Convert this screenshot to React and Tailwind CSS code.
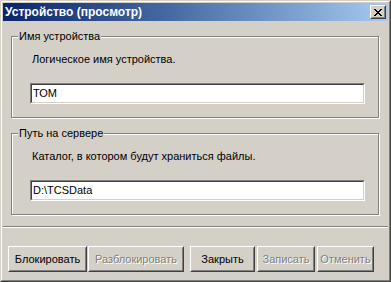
export default function App() {
  const btn =
    "h-[26px] flex items-center justify-center border border-t-white border-l-white border-r-[#404040] border-b-[#404040]";
  const btnInner =
    "w-full h-full flex items-center justify-center border border-t-[#d4d0c8] border-l-[#d4d0c8] border-r-[#808080] border-b-[#808080]";
  const disabled = "text-[#808080] [text-shadow:1px_1px_0_#fff]";

  return (
    <div className="w-[391px] h-[282px] bg-[#d4d0c8] border border-t-[#d4d0c8] border-l-[#d4d0c8] border-r-[#404040] border-b-[#404040] font-['Liberation_Sans',Arial,sans-serif] text-[11px] leading-[13px] text-black">
      <div className="h-full border border-t-white border-l-white border-r-[#808080] border-b-[#808080] p-px flex flex-col">
        {/* title bar */}
        <div className="h-[18px] flex items-center justify-between pl-[2px] pr-[2px] bg-gradient-to-r from-[#0a246a] to-[#a6caf0]">
          <span className="text-white font-bold text-[12px]">Устройство (просмотр)</span>
          <div className="w-[16px] h-[14px] border border-t-white border-l-white border-r-[#404040] border-b-[#404040] bg-[#d4d0c8]">
            <div className="w-full h-full border border-t-[#d4d0c8] border-l-[#d4d0c8] border-r-[#808080] border-b-[#808080] flex items-center justify-center">
              <svg width="8" height="7" viewBox="0 0 8 7" shapeRendering="crispEdges">
                <path d="M0 0h2v1h-2zM6 0h2v1h-2zM1 1h2v1h-2zM5 1h2v1h-2zM2 2h4v1h-4zM3 3h2v1h-2zM2 4h4v1h-4zM1 5h2v1h-2zM5 5h2v1h-2zM0 6h2v1h-2zM6 6h2v1h-2z" fill="#000" />
              </svg>
            </div>
          </div>
        </div>

        {/* body */}
        <div className="flex-1 flex flex-col pl-[8px] pr-[9px] pt-[15px]">
          <Group label="Имя устройства" hint="Логическое имя устройства." value="ТОМ" />
          <div className="h-[15px]" />
          <Group label="Путь на сервере" hint="Каталог, в котором будут храниться файлы." value="D:\TCSData" />

          <div className="mt-[11px] -mx-[8px] mr-[-9px] h-[2px] border-t border-t-[#808080] border-b border-b-white" />

          <div className="mt-[18px] flex items-center -ml-[3px]">
            <div className={`${btn} w-[79px]`}>
              <div className={btnInner}>Блокировать</div>
            </div>
            <div className={`${btn} w-[96px] ml-[1px]`}>
              <div className={`${btnInner} ${disabled}`}>Разблокировать</div>
            </div>
            <div className={`${btn} w-[65px] ml-[6px]`}>
              <div className={btnInner}>Закрыть</div>
            </div>
            <div className={`${btn} w-[58px] ml-[2px]`}>
              <div className={`${btnInner} ${disabled}`}>Записать</div>
            </div>
            <div className={`${btn} w-[57px] ml-[2px]`}>
              <div className={`${btnInner} ${disabled}`}>Отменить</div>
            </div>
          </div>
        </div>
      </div>
    </div>
  );
}

function Group({ label, hint, value }) {
  return (
    <div className="relative h-[82px] border border-[#808080] shadow-[inset_1px_1px_0_#fff,1px_1px_0_#fff] pt-[16px] pl-[20px] pr-[13px]">
      <span className="absolute top-[-7px] left-[6px] px-px bg-[#d4d0c8]">{label}</span>
      <div>{hint}</div>
      <div className="mt-[17px] h-[21px] border border-t-[#808080] border-l-[#808080] border-r-white border-b-white -ml-[2px]">
        <div className="h-full bg-white border border-t-[#404040] border-l-[#404040] border-r-[#d4d0c8] border-b-[#d4d0c8] flex items-center pl-px">
          {value}
        </div>
      </div>
    </div>
  );
}
